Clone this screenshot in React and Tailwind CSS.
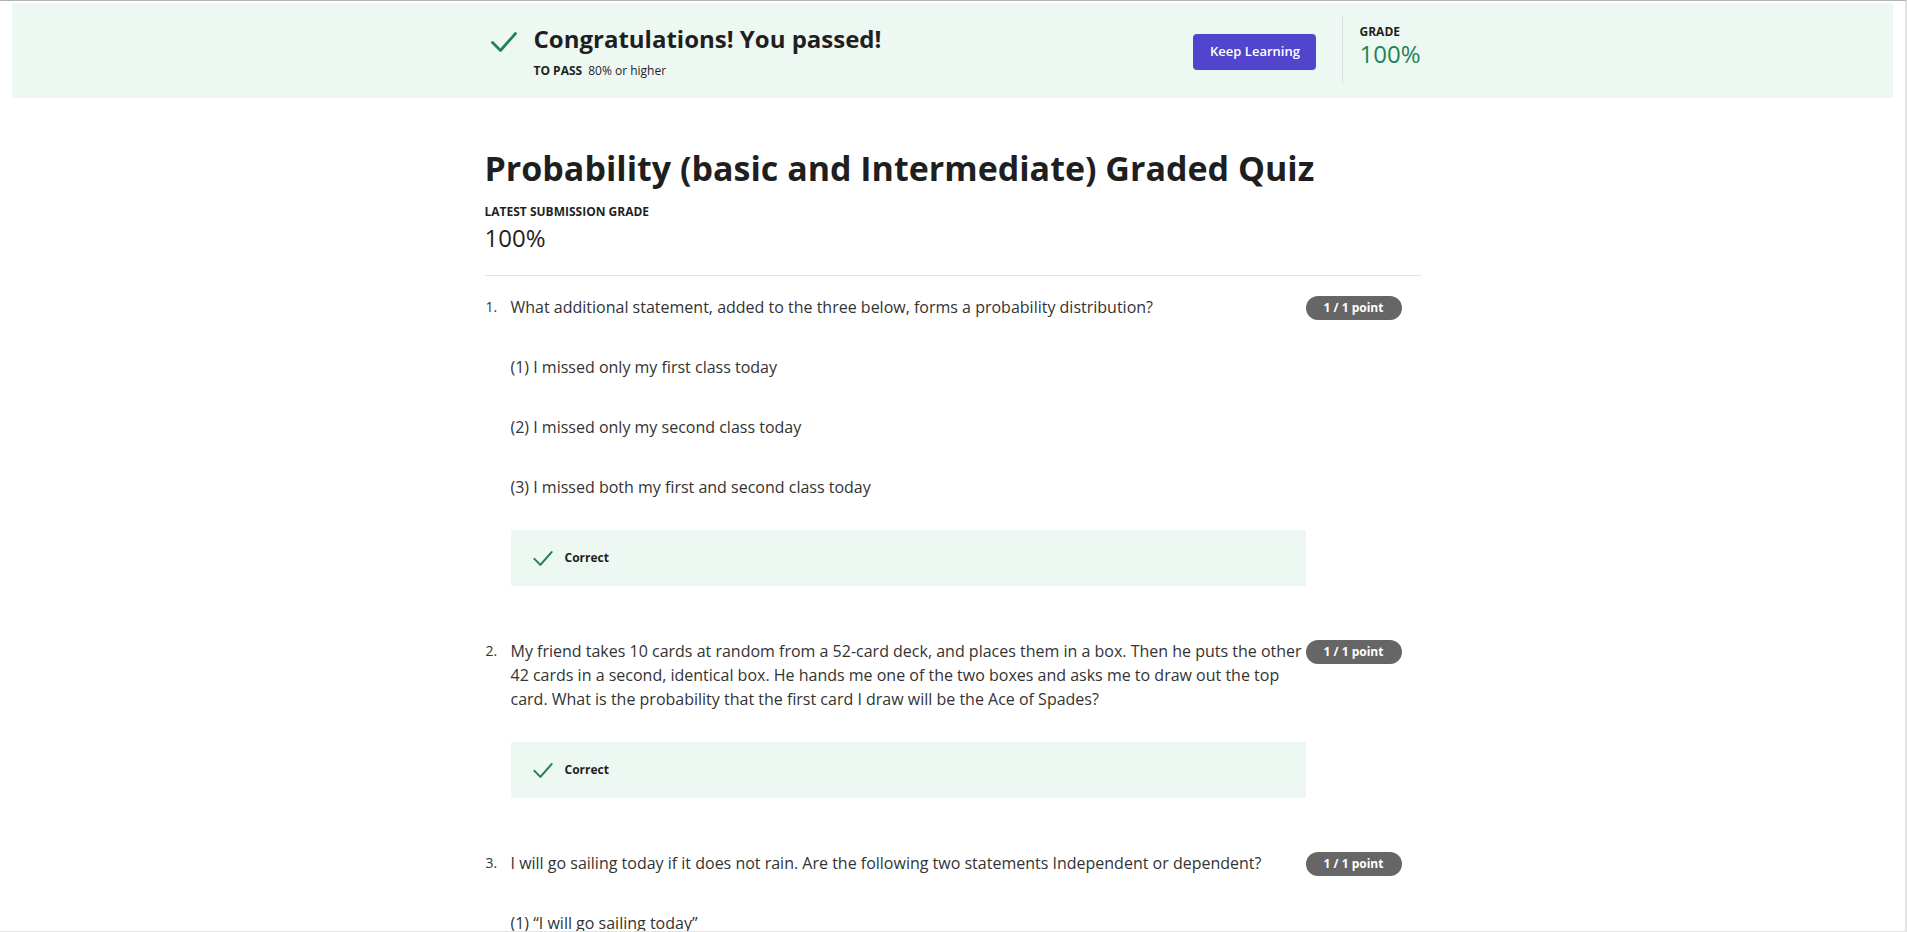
import React from 'react'

function Check({ className }) {
  return (
    <svg viewBox="0 0 26 20" className={className} fill="none">
      <path d="M1.5 10.5 L9.5 18.5 L24.5 1.5" stroke="#1f8354" strokeWidth="2.8" strokeLinecap="round" strokeLinejoin="round" />
    </svg>
  )
}

function PointBadge() {
  return (
    <div className="mt-[1px] flex h-6 w-[96px] shrink-0 items-center justify-center rounded-full bg-[#666666] text-xs font-bold text-white">
      1 / 1 point
    </div>
  )
}

function CorrectBox() {
  return (
    <div className="mt-[31px] flex h-[56px] items-center bg-[#eef8f3] pl-[22px]">
      <Check className="h-[15px] w-[20px]" />
      <span className="ml-3 text-xs font-bold text-[#1f1f1f]">Correct</span>
    </div>
  )
}

function Question({ num, text, options, correct, className = '' }) {
  return (
    <div className={`flex ${className}`}>
      <div className="w-[26px] shrink-0 pl-[1px] pt-[2px] text-sm leading-5 text-[#333]">{num}.</div>
      <div className="w-[795px] shrink-0">
        <p className="text-base leading-6 text-[#333]">{text}</p>
        {options && (
          <div className="mt-[36px] flex flex-col gap-[36px]">
            {options.map((o) => (
              <p key={o} className="text-base leading-6 text-[#333]">{o}</p>
            ))}
          </div>
        )}
        {correct && <CorrectBox />}
      </div>
      <PointBadge />
    </div>
  )
}

export default function App() {
  return (
    <div className="h-[932px] overflow-hidden border-t border-r-2 border-b border-t-[#b3b3b3] border-r-[#e4e4e4] border-b-[#e4e4e4] bg-white font-['Open_Sans',sans-serif] text-[#333]">
      {/* Passed banner */}
      <div className="mx-3 mt-[2px] h-[95px] bg-[#eef8f3]">
        <div className="mx-auto flex h-full w-[936px]">
          <div className="flex pl-[6px] pt-[20px]">
            <Check className="mt-[9px] h-[20px] w-[26px]" />
            <div className="ml-[17px]">
              <h2 className="text-[24px] font-bold leading-8 text-[#1f1f1f]">Congratulations! You passed!</h2>
              <p className="mt-2 text-xs leading-4 text-[#1f1f1f]">
                <span className="font-bold">TO PASS</span>
                <span className="ml-[6px]">80% or higher</span>
              </p>
            </div>
          </div>
          <div className="ml-auto flex h-full">
            <button className="mt-[31px] h-9 w-[123px] rounded bg-[#5145cd] text-[13px] font-semibold text-white">
              Keep Learning
            </button>
            <div className="ml-[26px] mt-[13px] h-[67px] w-px bg-[#dcdcdc]" />
            <div className="ml-[16px] pt-[21px]">
              <div className="text-xs font-bold leading-4 text-[#1f1f1f]">GRADE</div>
              <div className="text-[24px] font-normal leading-7 text-[#1f8354]">100%</div>
            </div>
          </div>
        </div>
      </div>

      {/* Quiz */}
      <div className="mx-auto w-[936px] pt-[48px]">
        <h1 className="text-[34px] font-bold leading-[44px] text-[#1f1f1f]">
          Probability (basic and Intermediate) Graded Quiz
        </h1>
        <div className="mt-[14px] text-xs font-bold leading-4 text-[#1f1f1f]">LATEST SUBMISSION GRADE</div>
        <div className="mt-[2px] text-[24px] font-normal leading-8 text-[#1f1f1f]">100%</div>
        <div className="mt-[21px] border-t border-[#e1e1e1]" />

        <div className="pt-[19px]">
          <Question
            num={1}
            text="What additional statement, added to the three below, forms a probability distribution?"
            options={[
              '(1) I missed only my first class today',
              '(2) I missed only my second class today',
              '(3) I missed both my first and second class today',
            ]}
            correct
          />
          <Question
            className="mt-[53px]"
            num={2}
            text="My friend takes 10 cards at random from a 52-card deck, and places them in a box. Then he puts the other 42 cards in a second, identical box. He hands me one of the two boxes and asks me to draw out the top card. What is the probability that the first card I draw will be the Ace of Spades?"
            correct
          />
          <Question
            className="mt-[53px]"
            num={3}
            text="I will go sailing today if it does not rain. Are the following two statements Independent or dependent?"
            options={['(1) “I will go sailing today”', '(2) “It does not rain”']}
          />
        </div>
      </div>
    </div>
  )
}
